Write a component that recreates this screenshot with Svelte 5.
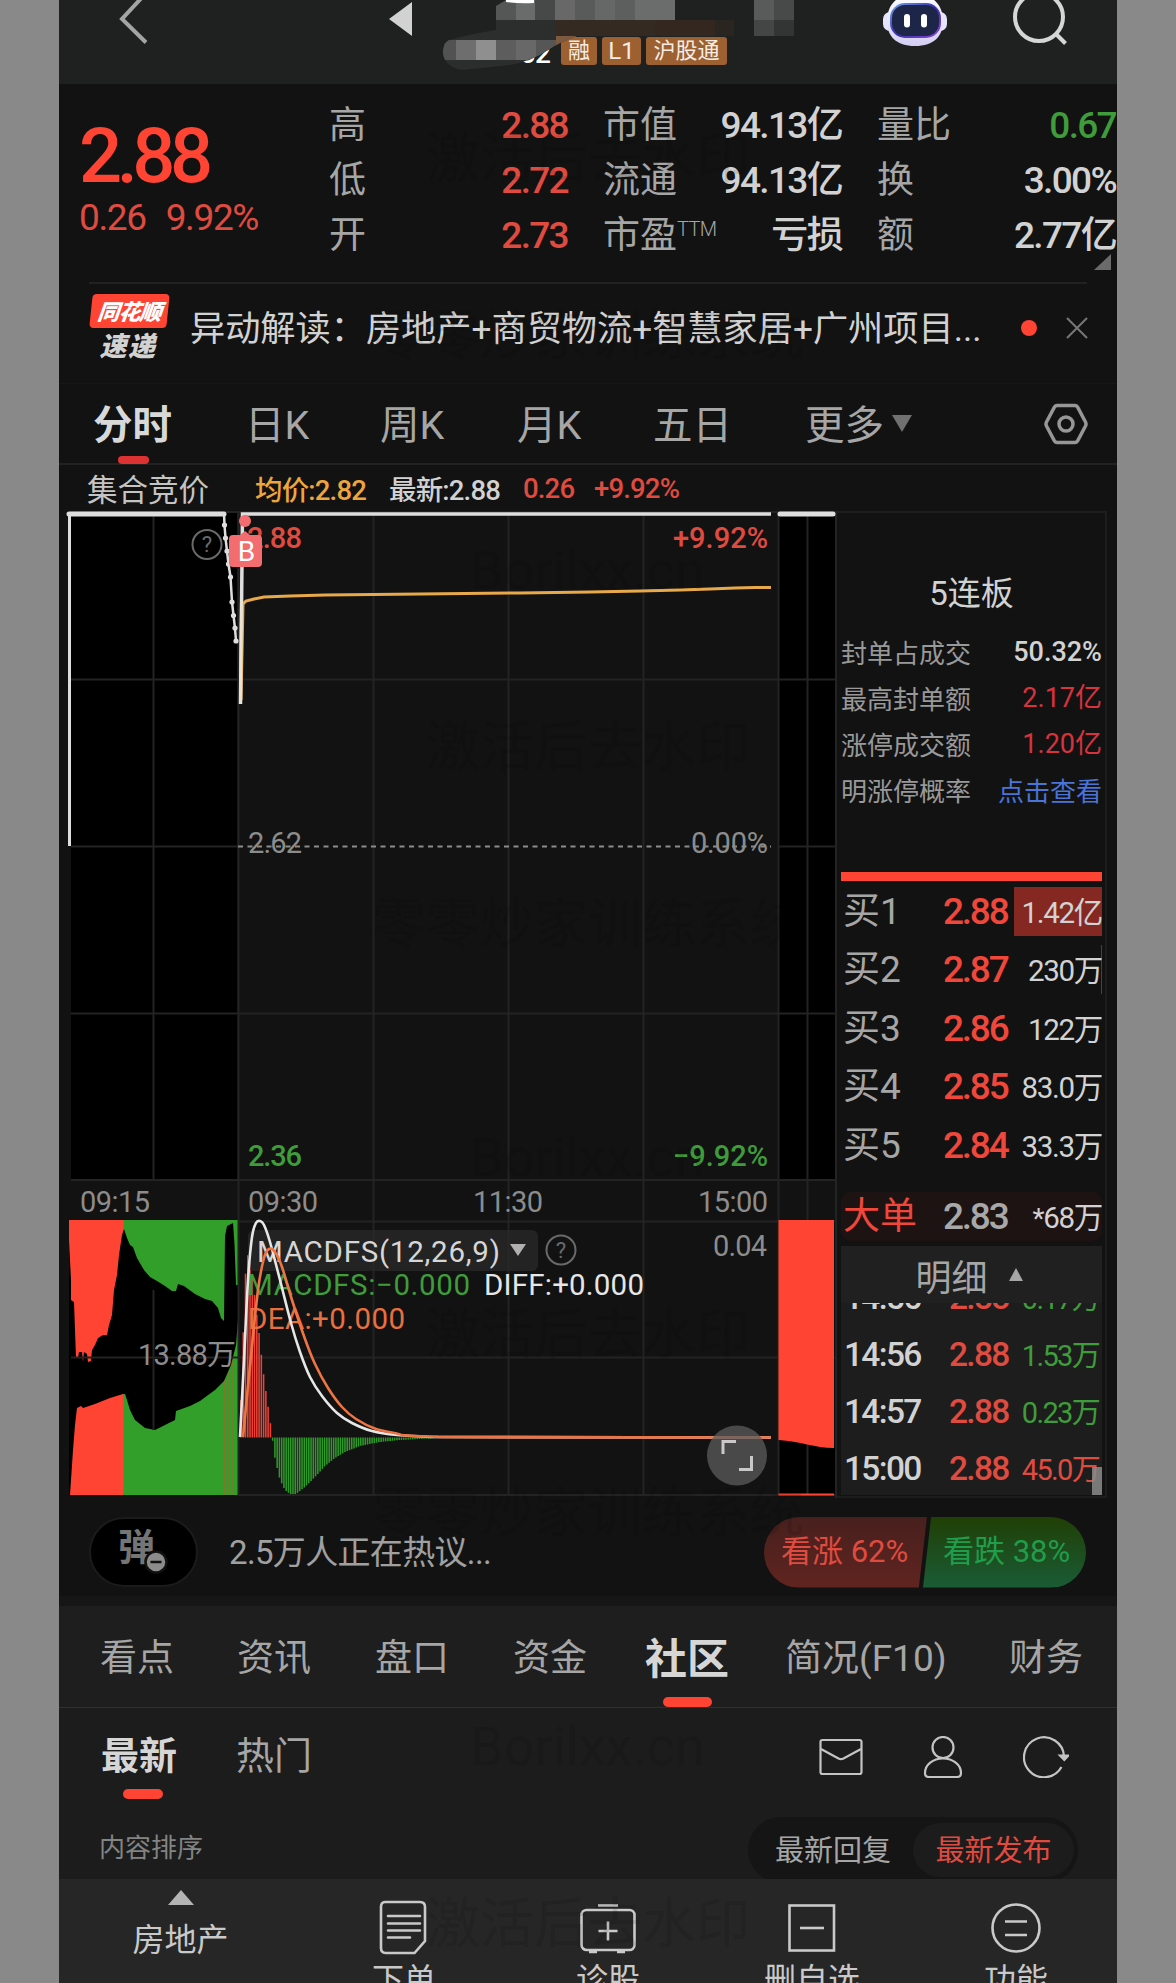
<script lang="ts">
  type Point = [number, number];

  const stats = [
    [
      { label: '高', value: '2.88', tone: 'up' },
      { label: '低', value: '2.72', tone: 'up' },
      { label: '开', value: '2.73', tone: 'up' },
    ],
    [
      { label: '市值', value: '94.13亿', tone: '' },
      { label: '流通', value: '94.13亿', tone: '' },
      { label: '市盈', sup: 'TTM', value: '亏损', tone: '' },
    ],
    [
      { label: '量比', value: '0.67', tone: 'down' },
      { label: '换', value: '3.00%', tone: '' },
      { label: '额', value: '2.77亿', tone: '' },
    ],
  ];

  const periods = ['分时', '日K', '周K', '月K', '五日'];
  const sections = ['看点', '资讯', '盘口', '资金', '社区', '简况(F10)', '财务'];

  const board = [
    { label: '封单占成交', value: '50.32%', tone: '' },
    { label: '最高封单额', value: '2.17亿', tone: 'crimson' },
    { label: '涨停成交额', value: '1.20亿', tone: 'crimson' },
    { label: '明涨停概率', value: '点击查看', tone: 'link' },
  ];

  const bids = [
    { label: '买1', price: '2.88', volume: '1.42亿', share: 100 },
    { label: '买2', price: '2.87', volume: '230万', share: 1.4 },
    { label: '买3', price: '2.86', volume: '122万', share: 0 },
    { label: '买4', price: '2.85', volume: '83.0万', share: 0 },
    { label: '买5', price: '2.84', volume: '33.3万', share: 0 },
  ];

  const trades = [
    { time: '14:56', price: '2.88', volume: '0.17万', tone: 'down' },
    { time: '14:56', price: '2.88', volume: '1.53万', tone: 'down' },
    { time: '14:57', price: '2.88', volume: '0.23万', tone: 'down' },
    { time: '15:00', price: '2.88', volume: '45.0万', tone: 'up' },
  ];

  const watermarks = [
    { text: '激活后去水印', x: 426, y: 160 },
    { text: '零零炒家训练系统', x: 372, y: 337 },
    { text: 'Borilxx.cn', x: 470, y: 571 },
    { text: '激活后去水印', x: 426, y: 748 },
    { text: '零零炒家训练系统', x: 372, y: 925 },
    { text: 'Borilxx.cn', x: 470, y: 1158 },
    { text: '激活后去水印', x: 426, y: 1336 },
    { text: '零零炒家训练系统', x: 372, y: 1514 },
    { text: 'Borilxx.cn', x: 470, y: 1747 },
    { text: '激活后去水印', x: 426, y: 1925 },
  ];

  const mosaic = [
    [496, 0, 20, 20, '#555656'], [516, 0, 19, 20, '#6a6b6b'], [535, 0, 20, 20, '#474848'],
    [555, 0, 20, 20, '#686868'], [575, 0, 20, 20, '#595a5a'], [595, 0, 20, 20, '#666767'],
    [615, 0, 20, 20, '#5d5e5e'], [635, 0, 40, 20, '#6b6c6c'], [556, 20, 99, 16, '#352a22'],
    [655, 20, 60, 16, '#33271f'], [715, 20, 19, 16, '#2a2521'], [754, 0, 20, 20, '#595a5a'],
    [774, 0, 20, 20, '#484949'], [754, 20, 20, 16, '#444545'], [774, 20, 20, 16, '#333535'],
  ] as const;

  const smudge = [
    [440, 40, 16, 20, '#525252'], [456, 40, 20, 20, '#6e6e6e'], [476, 40, 20, 20, '#8f8f8f'],
    [496, 40, 20, 20, '#5d5d5d'], [516, 40, 20, 20, '#686868'], [536, 40, 20, 20, '#565656'],
    [556, 36, 20, 14, '#7b5a40'],
  ] as const;

  const auction: Point[] = [
    [224, 513], [224.5, 525], [225.5, 538], [227, 551], [228.5, 564],
    [230.5, 577], [232, 602], [233.5, 615.5], [235, 628], [236, 641],
  ];

  const average: Point[] = [
    [241, 700], [243, 604], [246, 601], [254, 599], [264, 597], [290, 596], [325, 595], [420, 594],
    [520, 593], [590, 592], [640, 591], [680, 590], [710, 589], [735, 588], [755, 587.5], [771, 587.5],
  ];

  // unmatched area between the two auction volume bands
  const gap: Point[] = [
    [68, 1219], [69, 1240], [71, 1280], [71, 1300], [74, 1302], [76, 1358], [78, 1358], [79, 1352],
    [82, 1352], [83, 1362], [84, 1352], [87, 1354], [88, 1362], [91, 1361], [92, 1350], [95, 1345],
    [98, 1338], [103, 1335], [107, 1335], [109, 1325], [112, 1315], [114, 1290], [117, 1275], [119, 1255],
    [122, 1235], [124, 1229], [127, 1238], [130, 1245], [133, 1247], [137, 1258], [144, 1270], [150, 1277],
    [157, 1281], [165, 1286], [172, 1291], [176, 1291], [178, 1284], [184, 1286], [195, 1294], [205, 1299],
    [212, 1301], [218, 1308], [221, 1318], [224, 1321], [225, 1236], [227, 1226], [233, 1223], [234.5, 1244],
    [236, 1285], [238, 1285], [238, 1320], [236, 1345], [231, 1365], [224, 1381], [215, 1390], [200, 1401],
    [190, 1406], [176, 1411], [175, 1420], [165, 1425], [155, 1430], [145, 1428], [135, 1420], [130, 1410],
    [127, 1400], [125, 1394], [123, 1394], [110, 1398], [95, 1404], [83, 1408], [81, 1406], [77, 1408],
    [75, 1425], [73, 1450], [71, 1480], [70, 1495], [68, 1495],
  ];

  const diff: Point[] = [
    [240, 1437], [244, 1360], [248, 1280], [252, 1237], [256, 1223], [260, 1221], [264, 1225], [270, 1242],
    [280, 1280], [291, 1323], [300, 1352], [310, 1377], [322, 1396], [337, 1413], [352, 1423], [372, 1431],
    [397, 1435], [430, 1437], [771, 1437.5],
  ];

  const dea: Point[] = [
    [243, 1437], [250, 1366], [258, 1290], [264, 1258], [269, 1249], [275, 1252], [282, 1267], [292, 1300],
    [305, 1339], [315, 1364], [328, 1388], [342, 1407], [356, 1419], [376, 1429], [402, 1435], [440, 1437],
    [771, 1437.5],
  ];

  const histogram: Point[] = [
    [241, 1400], [243, 1340], [245, 1281], [247, 1253], [250, 1262], [254, 1290], [258, 1325], [260, 1340],
    [262, 1362], [265, 1385], [268, 1406], [270.5, 1424], [271, 1437.5], [272.5, 1437.5], [273, 1449], [276, 1463],
    [280, 1480], [285, 1490], [290, 1494], [296, 1494], [305, 1487], [315, 1477], [325, 1466], [335, 1458],
    [345, 1452], [360, 1446], [380, 1442], [400, 1440], [430, 1438.5], [450, 1437.5],
  ];

  const zero = 1437.5;

  function heightAt(x: number) {
    const i = histogram.findIndex((p) => p[0] >= x);
    if (i < 1) return histogram[0][1];
    const [x0, y0] = histogram[i - 1];
    const [x1, y1] = histogram[i];
    return y0 + ((x - x0) / (x1 - x0)) * (y1 - y0);
  }

  const bars = Array.from({ length: 92 }, (_, i) => {
    const x = 241 + i * 2.26;
    return { x, y: heightAt(x) };
  });

  const line = (points: Point[]) => points.map((p) => p.join(',')).join(' ');

  // Catmull-Rom to bezier, keeps the indicator lines round at the peak
  function curve(points: Point[]) {
    let d = `M${points[0]}`;
    for (let i = 0; i < points.length - 1; i++) {
      const a = points[i - 1] ?? points[i];
      const b = points[i];
      const c = points[i + 1];
      const e = points[i + 2] ?? c;
      const k = c[0] - b[0] > 60 ? 0 : 1 / 6;
      d += `C${b[0] + (c[0] - a[0]) * k},${b[1] + (c[1] - a[1]) * k} ${c[0] - (e[0] - b[0]) * (e[0] - b[0] > 60 ? 0 : k)},${c[1] - (e[1] - b[1]) * k} ${c[0]},${c[1]}`;
    }
    return d;
  }
</script>

<main class="phone">
  <header class="topbar">
    <svg class="back" width="30" height="46" viewBox="0 0 30 46"><path d="M28-8 3 19 27 42.500" /></svg>
    <svg class="prev" width="24" height="36" viewBox="0 0 24 36"><path d="M23 2v34L0 19z" /></svg>
    <div class="title">
      <span class="code">02</span>
      <span class="badge">融</span>
      <span class="badge l1">L1</span>
      <span class="badge wide">沪股通</span>
      <svg class="mosaic" width="370" height="84" viewBox="440 0 370 84">
        <clipPath id="blob"><path d="M449 40Q500 36 556 36H577Q560 42 548 50Q532 61 510 65L462 70Q442 66 443 50Q444 42 449 40Z" /></clipPath>
        <path d="M449 40Q470 34 496 30V0H560V20L577 36Q560 42 548 50Q532 61 510 65L462 70Q442 66 443 50Z" fill="#2c2e2e" />
        {#each mosaic as [x, y, w, h, fill]}
          <rect {x} {y} width={w} height={h} {fill} />
        {/each}
        <g clip-path="url(#blob)">
          {#each smudge as [x, y, w, h, fill]}
            <rect {x} {y} width={w} height={h} {fill} />
          {/each}
        </g>
        <path d="M493 0h13l-10 6z" fill="#1f2121" />
        <path d="M506 0h28v3q-14 1-28-1z" fill="#fff" />
      </svg>
    </div>
    <svg class="robot" width="66" height="48" viewBox="0 0 66 48">
      <defs>
        <linearGradient id="shell" x1="0" y1="0" x2="0" y2="1">
          <stop offset="0" stop-color="#fff" />
          <stop offset="1" stop-color="#d3cdf3" />
        </linearGradient>
        <linearGradient id="visor" x1="0" y1="0" x2="1" y2="1">
          <stop offset="0" stop-color="#6ea6e8" />
          <stop offset="0.5" stop-color="#3a2fb0" />
          <stop offset="1" stop-color="#8b45d8" />
        </linearGradient>
      </defs>
      <rect x="1" y="12" width="64" height="19" rx="7" fill="#e6e4fb" />
      <path d="M33-6C52-6 61 6 61 21S52 46 33 46 5 36 5 21 14-6 33-6z" fill="url(#shell)" />
      <rect x="8" y="3" width="51" height="35" rx="15" fill="url(#visor)" />
      <rect x="10" y="5" width="47" height="31" rx="13" fill="#1d2548" />
      <rect x="22" y="14" width="6" height="13.500" rx="3" fill="#fff" />
      <rect x="39" y="14" width="6" height="13.500" rx="3" fill="#fff" />
    </svg>
    <svg class="search" width="56" height="46" viewBox="0 0 56 46">
      <circle cx="26" cy="17" r="24" />
      <path d="m43 34 9.500 9.500" />
    </svg>
  </header>

  <section class="quote">
    <div class="last">
      <div class="price">2.88</div>
      <div class="change"><span>0.26</span><span>9.92%</span></div>
    </div>
    {#each stats as column}
      <dl class="stats">
        {#each column as item}
          <div class="stat">
            <dt>{item.label}{#if item.sup}<sup>{item.sup}</sup>{/if}</dt>
            <dd class={item.tone}>{item.value}</dd>
          </div>
        {/each}
      </dl>
    {/each}
    <svg class="corner" width="17" height="16" viewBox="0 0 17 16"><path d="M17 0v16H0z" /></svg>
  </section>

  <section class="news">
    <div class="brand">
      <span class="brand-top"><b>同花顺</b></span>
      <span class="brand-bottom">速递</span>
    </div>
    <p>异动解读：房地产+商贸物流+智慧家居+广州项目...</p>
    <i class="dot"></i>
    <svg width="24" height="24" viewBox="0 0 24 24"><path d="m2 2 20 20M22 2 2 22" /></svg>
  </section>

  <nav class="periods">
    {#each periods as period, i}
      <button class:active={i === 0}>{period}</button>
    {/each}
    <button class="more">更多<svg width="20" height="17" viewBox="0 0 20 17"><path d="M0 0h20L10 17z" /></svg></button>
    <svg class="gear" width="44" height="42" viewBox="0 0 44 42">
      <path d="M13 2.500h18Q32.500 2.500 33.500 4L41.500 19Q42.500 21 41.500 23L33.500 38Q32.500 39.500 31 39.500H13Q11.500 39.500 10.500 38L2.500 23Q1.500 21 2.500 19L10.500 4Q11.500 2.500 13 2.500z" />
      <circle cx="22" cy="21" r="7" />
    </svg>
  </nav>

  <div class="summary">
    <span class="auction">集合竞价</span>
    <span class="avg">均价:2.82</span>
    <span class="latest">最新:2.88</span>
    <span class="up diff">0.26</span>
    <span class="up">+9.92%</span>
  </div>

  <section class="market">
    <svg class="chart" width="778" height="990" viewBox="59 508 778 990">
      <rect x="71" y="512" width="166" height="668" fill="#000" />
      <rect x="779" y="512" width="56" height="668" fill="#000" />
      <rect x="69" y="1220" width="55" height="275" fill="#ff4433" />
      <rect x="123.500" y="1220" width="114.500" height="275" fill="#329f2a" />
      <path d="M224.500 1380V1495M228 1372V1495M232 1360V1495" stroke="#7d7a2c" stroke-width="1.500" />
      <polygon points={line(gap)} fill="#000" />
      <rect x="59" y="1215" width="10" height="285" fill="#121212" />
      <rect x="779" y="1220" width="56" height="275" fill="#000" />

      <path
        class="grid"
        d="M71 512H837M71 679.500H837M71 846.500H238M778 846.500H837M71 1013.500H837M71 1180H837M238 1221.500H837M71 1357.500H837M238 1495H837M153.500 512V1180M153.500 1290V1430M238.500 512V1495M373.500 512V1495M508.500 512V1495M643.500 512V1495M778.500 512V1495M807.500 512V1495M836 512V1498"
      />

      <path d="M778.500 1220H834V1448C815 1448 800 1441 778.500 1440z" fill="#ff4433" />
      <path d="M778.500 1494.500H834" stroke="#ff4433" stroke-width="2" />

      <path d="M238 846.500H771" stroke="#8c8c8c" stroke-width="1.800" stroke-dasharray="5 4.500" />
      <path d="M69.500 846V512" stroke="#dedede" stroke-width="3" />
      <path d="M69 514H224M780 514H833" stroke="#dedede" stroke-width="5" stroke-linecap="round" />
      <polyline points={line(auction)} fill="none" stroke="#dedede" stroke-width="2.500" />
      {#each auction.slice(1) as [cx, cy]}
        <circle {cx} {cy} r="2.600" fill="#dedede" />
      {/each}
      <path d="M240.500 704 242.500 514H771" fill="none" stroke="#dedede" stroke-width="3.500" />
      <polyline points={line(average)} fill="none" stroke="#e8a94a" stroke-width="3" />
      <path d="M240.500 704 241.500 600" stroke="#e9e3d6" stroke-width="3" />

      <g class="label">
        <text x="247" y="548" class="up" textLength="55">2.88</text>
        <text x="673" y="548" class="up" textLength="95">+9.92%</text>
        <text x="248" y="853" textLength="54">2.62</text>
        <text x="691" y="853" textLength="77">0.00%</text>
        <text x="248" y="1166" class="down" textLength="54">2.36</text>
        <text x="673" y="1166" class="down" textLength="95">−9.92%</text>
        <text x="80" y="1211.500" textLength="70">09:15</text>
        <text x="248" y="1211.500" textLength="70">09:30</text>
        <text x="473" y="1211.500" textLength="70">11:30</text>
        <text x="698" y="1211.500" textLength="70">15:00</text>
        <text x="713" y="1256" textLength="54">0.04</text>
        <text x="138" y="1365" textLength="98">13.88万</text>
      </g>

      <g class="help">
        <circle cx="207" cy="544.500" r="14.500" />
        <text x="207" y="552">?</text>
        <circle cx="561" cy="1250" r="14.500" />
        <text x="561" y="1257.500">?</text>
      </g>

      <circle cx="245" cy="521" r="6" fill="#f26c70" />
      <path d="M233 535h7l5-4 5 4h8q4 0 4 4v24q0 4-4 4h-25q-4 0-4-4v-24q0-4 4-4z" fill="#f26c70" />
      <text class="marker" x="246.500" y="560.500">B</text>

      {#each bars as bar}
        <path d="M{bar.x} {zero}V{bar.y}" stroke={bar.y < zero ? '#ee4236' : '#2f9a2a'} stroke-width="1.550" />
      {/each}
      <rect x="248" y="1230" width="290" height="41" rx="6" fill="#2a2a2a" fill-opacity="0.750" />
      <g class="indicator">
        <text x="257" y="1262" fill="#d6d6d6" textLength="243">MACDFS(12,26,9)</text>
        <text x="247" y="1295" class="down" textLength="223">MACDFS:−0.000</text>
        <text x="484" y="1295" fill="#e6e6e6" textLength="160">DIFF:+0.000</text>
        <text x="248" y="1329" fill="#e8703f" textLength="157">DEA:+0.000</text>
      </g>
      <path d="M510 1244h16l-8 12z" fill="#b0b0b0" />
      <path d={curve(diff)} fill="none" stroke="#e6e6e6" stroke-width="2.600" />
      <path d={curve(dea)} fill="none" stroke="#ef7444" stroke-width="2.600" />

      <circle cx="737" cy="1455.500" r="30" fill="#5c5c5c" fill-opacity="0.750" />
      <path d="M723 1454V1441.500H736M739 1469.500H751.500V1456" fill="none" stroke="#c9c9c9" stroke-width="3" />
    </svg>

    <aside class="depth">
      <h2>5连板</h2>
      <ul class="board">
        {#each board as row}
          <li><span>{row.label}</span><b class={row.tone}>{row.value}</b></li>
        {/each}
      </ul>
      <ul class="bids">
        {#each bids as bid}
          <li>
            <span class="name">{bid.label}</span>
            <b class="deal">{bid.price}</b>
            <span class="volume">
              {#if bid.share}<i style="width: {bid.share}%"></i>{/if}
              <em>{bid.volume}</em>
            </span>
          </li>
        {/each}
      </ul>
      <div class="block-order">
        <span class="name">大单</span>
        <b class="deal">2.83</b>
        <span class="volume"><em><small>*</small>68万</em></span>
      </div>
      <div class="ticks">
        <h3>明细<svg width="14" height="13" viewBox="0 0 14 13"><path d="M7 0l7 13H0z" /></svg></h3>
        <ul>
          {#each trades as trade}
            <li><span>{trade.time}</span><b>{trade.price}</b><em class={trade.tone}>{trade.volume}</em></li>
          {/each}
        </ul>
        <i class="scroll"></i>
      </div>
    </aside>
  </section>

  <section class="chat">
    <div class="danmu">
      弹
      <svg width="24" height="24" viewBox="0 0 24 24"><circle cx="12" cy="12" r="10.500" /><path d="M6.500 12h11" /></svg>
    </div>
    <p>2.5万人正在热议...</p>
    <div class="vote">
      <span class="bull">看涨 62%</span>
      <span class="bear">看跌 38%</span>
    </div>
  </section>

  <nav class="sections">
    {#each sections as section}
      <button class:active={section === '社区'}>{section}</button>
    {/each}
  </nav>

  <section class="feed">
    <div class="feed-tabs">
      <button class="active">最新</button>
      <button>热门</button>
      <div class="tools">
        <svg width="44" height="42" viewBox="0 0 44 42"><rect x="1.500" y="4" width="41" height="34" rx="2" /><path d="m2 13 17.500 9.500q2.500 1.300 5 0L42 13" /></svg>
        <svg width="44" height="42" viewBox="0 0 44 42"><circle cx="22" cy="11.500" r="10.500" /><path d="M22 22.500c10 0 18 6 18 14.500q0 4-4 4H8q-4 0-4-4C4 28.500 12 22.500 22 22.500z" /></svg>
        <svg width="46" height="42" viewBox="0 0 46 42"><path d="M38.500 31A20 20 0 1 1 41 20.500" /><path class="fill" d="M37 19.500h8.500l-4.200 4.500z" /></svg>
      </div>
    </div>
    <div class="sort">
      <span>内容排序</span>
      <div class="switch"><span>最新回复</span><span class="on">最新发布</span></div>
    </div>
  </section>

  <footer class="actions">
    <div class="sector">
      <svg width="26" height="15" viewBox="0 0 26 15"><path d="M13 0l13 15H0z" /></svg>
      房地产
    </div>
    <div class="action">
      <svg width="56" height="58" viewBox="0 0 56 58"><path d="M9 4h35q5 0 5 5v34L38.500 55H9.500q-4.500 0-4.500-5V9q0-5 4-5z" /><path d="M12 18h32M12 25.500h32M12 32.500h32M12 39.500h22" stroke-linecap="round" /></svg>
      下单
    </div>
    <div class="action">
      <svg width="58" height="58" viewBox="0 0 58 58"><rect x="2.500" y="12" width="53" height="40" rx="5" /><path d="M19 7.500h20M29 23.500v19M19.500 33h19M10 54h8M38 54h8" /></svg>
      诊股
    </div>
    <div class="action">
      <svg width="56" height="58" viewBox="0 0 56 58"><rect x="5.500" y="7.500" width="44.500" height="45" /><path d="M16 30h24" /></svg>
      删自选
    </div>
    <div class="action">
      <svg width="56" height="58" viewBox="0 0 56 58"><circle cx="28" cy="30" r="23.500" /><path d="M17 23.500h22M17 37h22" /></svg>
      功能
    </div>
  </footer>

  {#each watermarks as mark}
    <span class="watermark" style="left: {mark.x - 59}px; top: {mark.y - 40}px">{mark.text}</span>
  {/each}
</main>

<style>
  :global(body) {
    background: #898989;
  }

  .phone {
    position: relative;
    box-sizing: border-box;
    width: 1058px;
    height: 1983px;
    margin-left: 59px;
    overflow: hidden;
    background: #121212;
    color: #d2d2d2;
    font-family: Roboto, 'Noto Sans CJK SC', sans-serif;
  }

  .phone * {
    box-sizing: border-box;
  }

  h2, h3, p, ul, dl, dd {
    margin: 0;
    padding: 0;
    list-style: none;
  }

  em, i {
    font-style: normal;
  }

  b {
    font-weight: 500;
  }

  button {
    padding: 0;
    border: 0;
    background: none;
    color: #a6a6a6;
    font: inherit;
    text-align: left;
    white-space: nowrap;
  }

  svg {
    flex: none;
    display: block;
  }

  .up {
    color: #e04b40;
    fill: #e04b40;
  }

  .down {
    color: #3f9c3a;
    fill: #3f9c3a;
  }

  .topbar {
    display: flex;
    align-items: flex-start;
    height: 84px;
    padding-left: 60px;
    background: #1f2121;
  }

  .back path,
  .search {
    fill: none;
    stroke: #a3a4a4;
    stroke-width: 4;
  }

  .search {
    margin-left: 65px;
    stroke: #d6d6d6;
  }

  .prev {
    margin-left: 240px;
    fill: #d2d2d2;
  }

  .title {
    position: relative;
    display: flex;
    align-items: flex-start;
    width: 370px;
    height: 84px;
    margin-left: 27px;
    padding: 37px 0 0 80px;
  }

  .code {
    width: 41px;
    color: #fff;
    font-size: 28px;
    font-weight: 500;
    line-height: 33px;
    letter-spacing: -0.03em;
  }

  .badge {
    width: 36px;
    height: 28px;
    margin-right: 5px;
    border-radius: 3px;
    background: #9d6031;
    color: #f5ece4;
    font-size: 22px;
    line-height: 27px;
    text-align: center;
  }

  .badge.l1 {
    width: 39px;
    font-size: 24px;
    line-height: 29px;
  }

  .badge.wide {
    width: 81px;
  }

  .mosaic {
    position: absolute;
    top: 0;
    left: 0;
  }

  .robot {
    margin-left: 72px;
  }

  .quote {
    position: relative;
    display: flex;
    height: 198px;
    padding: 14px 0 0 20px;
  }

  .last {
    width: 250px;
    color: #ff4433;
  }

  .price {
    padding-top: 16px;
    font-size: 76px;
    font-weight: 500;
    line-height: 84px;
    letter-spacing: -0.072em;
  }

  .change {
    display: flex;
    gap: 20px;
    margin-top: -2px;
    color: #e04b40;
    font-size: 37px;
    line-height: 44px;
    letter-spacing: -0.037em;
  }

  .stats {
    width: 239px;
    margin-right: 35px;
  }

  .stats:nth-child(4) {
    width: 239px;
    margin-right: 0;
  }

  .stat {
    display: flex;
    justify-content: space-between;
    height: 55px;
    line-height: 55px;
  }

  .stat dt {
    display: flex;
    color: #a6a6a6;
    font-size: 37px;
  }

  .stat sup {
    font-size: 20px;
    font-weight: 300;
    line-height: 43px;
    vertical-align: baseline;
    letter-spacing: -0.03em;
  }

  .stat dd {
    font-size: 37px;
    font-weight: 500;
    letter-spacing: -0.045em;
  }

  .corner {
    position: absolute;
    right: 6px;
    bottom: 12px;
    fill: #6b6b6b;
  }

  .news {
    display: flex;
    align-items: center;
    height: 101px;
    margin: 0 30px;
    padding-bottom: 12px;
    border-top: 2px solid #212121;
  }

  .news p {
    flex: none;
    width: 832px;
    padding: 0 0 4px 23px;
    font-size: 35.200px;
    white-space: nowrap;
  }

  .brand {
    flex: none;
    width: 78px;
    height: 68px;
    font-family: 'Noto Sans CJK SC', sans-serif;
    font-style: italic;
    font-weight: 900;
    text-align: center;
  }

  .brand-top {
    display: block;
    width: 77px;
    height: 34px;
    margin-left: 2px;
    border-radius: 4px;
    background: #ff4433;
    color: #fff;
    font-size: 22px;
    line-height: 33px;
    transform: skewX(-6deg);
  }

  .brand-top b {
    font-weight: 900;
    letter-spacing: -0.04em;
  }

  .brand-bottom {
    display: block;
    font-size: 27px;
    line-height: 34px;
    letter-spacing: 0.06em;
  }

  .dot {
    flex: none;
    width: 16px;
    height: 16px;
    margin: 0 28px 0 22px;
    border-radius: 50%;
    background: #ff4433;
  }

  .news svg {
    stroke: #777;
    stroke-width: 2;
  }

  .periods {
    position: relative;
    display: grid;
    grid-template-columns: 152px 135px 137px 136px 152px 239px 44px;
    align-items: center;
    height: 82px;
    padding-left: 34px;
    border-top: 1px solid #171717;
    border-bottom: 2px solid #222;
    font-size: 39.500px;
  }

  .periods button {
    padding-bottom: 5px;
  }

  .periods .active {
    color: #d8d8d8;
    font-weight: 700;
  }

  .periods .active::after {
    content: '';
    position: absolute;
    bottom: -1px;
    left: 59px;
    width: 31px;
    height: 8px;
    border-radius: 4px;
    background: #dc3232;
  }

  .more {
    display: flex;
    align-items: center;
    gap: 8px;
  }

  .more svg {
    margin-top: 4px;
    fill: #707070;
  }

  .gear {
    fill: none;
    stroke: #979797;
    stroke-width: 3.500;
  }

  .summary {
    display: flex;
    align-items: center;
    height: 43px;
    padding: 3px 0 0 28px;
    font-size: 27.500px;
    letter-spacing: -0.03em;
    font-weight: 500;
  }

  .auction {
    width: 168px;
    color: #c4c4c4;
    font-size: 30.500px;
    font-weight: 400;
    letter-spacing: 0;
  }

  .avg {
    width: 134px;
    color: #eda63c;
  }

  .latest {
    width: 134px;
  }

  .summary .diff {
    width: 71px;
  }

  .market {
    display: flex;
    height: 990px;
  }

  .grid {
    fill: none;
    stroke: #232323;
    stroke-width: 2;
  }

  .label text {
    font-size: 29px;
  }

  .label text.up,
  .label text.down {
    font-weight: 500;
  }

  .label text:not(.up):not(.down) {
    fill: #8c8c8c;
  }

  .indicator text {
    font-size: 29.500px;
  }

  .help circle {
    fill: none;
    stroke: #6a6a6a;
    stroke-width: 2;
  }

  .help text {
    fill: #6a6a6a;
    font-size: 22px;
    text-anchor: middle;
  }

  .marker {
    fill: #fff;
    font-size: 28px;
    text-anchor: middle;
  }

  .depth {
    display: flex;
    flex-direction: column;
    width: 270px;
    height: 987px;
    margin-top: 3px;
    padding: 0 3px 0 4px;
    border: 2px solid #1d1d1d;
    border-left: 0;
  }

  .depth h2 {
    flex: none;
    padding-top: 55px;
    font-size: 33px;
    font-weight: 400;
    line-height: 52px;
    text-align: center;
  }

  .board {
    flex: none;
    height: 261px;
    padding-top: 11px;
    border-bottom: 9px solid #ff4433;
  }

  .board li {
    display: flex;
    justify-content: space-between;
    height: 46px;
    color: #999;
    font-size: 26px;
    line-height: 46px;
  }

  .board b {
    color: #d2d2d2;
    font-size: 27px;
    line-height: 43px;
  }

  .board .crimson {
    color: #d8323c;
    font-weight: 400;
  }

  .board .link {
    color: #4a74d8;
    font-size: 26px;
    font-weight: 400;
    line-height: 46px;
  }

  .bids {
    flex: none;
    height: 311px;
    padding-top: 6px;
  }

  .bids li,
  .block-order {
    display: flex;
    flex: none;
    align-items: center;
    height: 49px;
    margin-bottom: 9.400px;
    padding-left: 2px;
  }

  .name {
    width: 100px;
    color: #a6a6a6;
    font-size: 37px;
    line-height: 49px;
  }

  .deal {
    width: 71px;
    color: #f0473a;
    font-size: 37px;
    letter-spacing: -0.06em;
    line-height: 49px;
  }

  .volume {
    position: relative;
    flex: 1;
    height: 49px;
    font-size: 29.500px;
    line-height: 52px;
    letter-spacing: -0.045em;
    text-align: right;
  }

  .volume i {
    position: absolute;
    top: 0;
    right: 0;
    height: 49px;
    background: #852822;
  }

  .volume em {
    position: relative;
    font-weight: 400;
    white-space: nowrap;
  }

  .volume small {
    font-size: 28px;
  }

  .block-order {
    margin-bottom: 5px;
    border-radius: 10px;
    background: #1e1313;
  }

  .block-order .name {
    color: #f0473a;
  }

  .block-order .deal {
    color: #a8a8a8;
  }

  .ticks {
    position: relative;
    display: flex;
    flex-direction: column;
    flex: 1;
    min-height: 0;
    margin-bottom: 1px;
    background: #1d1d1d;
  }

  .ticks h3 {
    display: flex;
    flex: none;
    align-items: center;
    justify-content: center;
    gap: 21px;
    height: 57px;
    padding-right: 5px;
    background: #202020;
    color: #a6a6a6;
    font-size: 36px;
    font-weight: 400;
  }

  .ticks h3 svg {
    fill: #a6a6a6;
  }

  .ticks ul {
    display: flex;
    flex: 1;
    flex-direction: column;
    justify-content: flex-end;
    min-height: 0;
    overflow: hidden;
  }

  .ticks li {
    display: flex;
    flex: none;
    height: 57px;
    padding: 0 3px;
    font-size: 33.500px;
    font-weight: 500;
    line-height: 62px;
    letter-spacing: -0.05em;
  }

  .ticks li span {
    width: 105px;
  }

  .ticks li b {
    color: #e04b40;
  }

  .ticks li em {
    flex: 1;
    font-size: 29px;
    font-weight: 400;
    line-height: 64px;
    text-align: right;
  }

  .scroll {
    position: absolute;
    right: 0;
    bottom: 0;
    width: 10px;
    height: 28px;
    background: #8a8a8a;
    opacity: 0.850;
  }

  .chat {
    display: flex;
    align-items: center;
    height: 98px;
    padding: 10px 31px 0 30px;
  }

  .danmu {
    position: relative;
    width: 109px;
    height: 70px;
    padding-left: 27px;
    border: 2px solid #1b1b1b;
    border-radius: 35px;
    background: #000;
    color: #757575;
    font-size: 37px;
    font-weight: 700;
    line-height: 60px;
  }

  .danmu svg {
    position: absolute;
    top: 31px;
    left: 53px;
    fill: #8c8c8c;
    stroke: #111;
    stroke-width: 2.500;
  }

  .chat p {
    flex: 1;
    padding: 0 0 4px 31px;
    color: #a0a0a0;
    font-size: 33px;
    letter-spacing: -0.02em;
  }

  .vote {
    display: flex;
    width: 322px;
    height: 71px;
    overflow: hidden;
    border-radius: 36px;
    font-size: 31px;
    line-height: 70px;
    white-space: nowrap;
  }

  .bull {
    width: 163px;
    padding-left: 17px;
    background: linear-gradient(#47201d, #602420);
    clip-path: polygon(0 0, 100% 0, 95% 100%, 0 100%);
    color: #e04b40;
  }

  .bear {
    width: 163px;
    margin-left: -4px;
    padding-left: 20px;
    background: linear-gradient(#203f05, #1a5c36);
    clip-path: polygon(5% 0, 100% 0, 100% 100%, 0 100%);
    color: #1f9d4a;
  }

  .sections {
    display: grid;
    grid-template-columns: 137px 138px 138px 132px 140px 224px 80px;
    align-items: center;
    height: 112px;
    padding-left: 41px;
    border-top: 10px solid #161616;
    border-bottom: 1px solid #303030;
    background: #1e1e1e;
    font-size: 37px;
  }

  .sections button {
    padding-bottom: 3px;
  }

  .sections .active {
    position: relative;
    color: #d6d6d6;
    font-size: 42px;
    font-weight: 700;
  }

  .sections .active::after,
  .feed .active::after {
    content: '';
    position: absolute;
    bottom: -18px;
    left: 18px;
    width: 49px;
    height: 10px;
    border-radius: 5px;
    background: #ff4433;
  }

  .feed {
    height: 171px;
    background: #1c1c1c;
  }

  .feed-tabs {
    display: flex;
    align-items: center;
    height: 97px;
    padding: 0 48px 0 42px;
    font-size: 38px;
  }

  .feed-tabs button {
    width: 135px;
    padding-bottom: 8px;
  }

  .feed .active {
    position: relative;
    color: #d6d6d6;
    font-weight: 700;
  }

  .feed .active::after {
    bottom: -11px;
    left: 22px;
    width: 40px;
  }

  .tools {
    display: flex;
    gap: 58px;
    margin-left: auto;
    fill: none;
    stroke: #c4c4c4;
    stroke-width: 2.200;
  }

  .tools .fill {
    fill: #c4c4c4;
  }

  .sort {
    display: flex;
    align-items: flex-start;
    justify-content: space-between;
    height: 74px;
    padding: 12px 39px 0 40px;
    overflow: hidden;
    color: #838383;
    font-size: 26px;
    line-height: 63px;
  }

  .switch {
    display: flex;
    width: 330px;
    height: 66px;
    padding: 6px 4px 6px 27px;
    border-radius: 33px;
    background: #151515;
    color: #a6a6a6;
    font-size: 29px;
    line-height: 56px;
  }

  .switch span {
    width: 138px;
  }

  .switch .on {
    width: 161px;
    border-radius: 28px;
    background: #1c1c1c;
    color: #e04b40;
    text-align: center;
  }

  .actions {
    display: grid;
    grid-template-columns: 243px repeat(4, 204px);
    height: 104px;
    overflow: hidden;
    background: #262626;
    color: #c9c9c9;
    font-size: 32px;
  }

  .sector {
    display: flex;
    flex-direction: column;
    align-items: center;
    padding-top: 11px;
    line-height: 71px;
  }

  .sector svg {
    fill: #b4b4b4;
  }

  .action {
    display: flex;
    flex-direction: column;
    align-items: center;
    padding-top: 19px;
    line-height: 48px;
  }

  .action svg {
    fill: none;
    stroke: #c9c9c9;
    stroke-width: 2.600;
  }

  .watermark {
    position: absolute;
    color: rgba(0, 0, 0, 0.100);
    font-size: 54px;
    line-height: 80px;
    white-space: nowrap;
    pointer-events: none;
  }
</style>
